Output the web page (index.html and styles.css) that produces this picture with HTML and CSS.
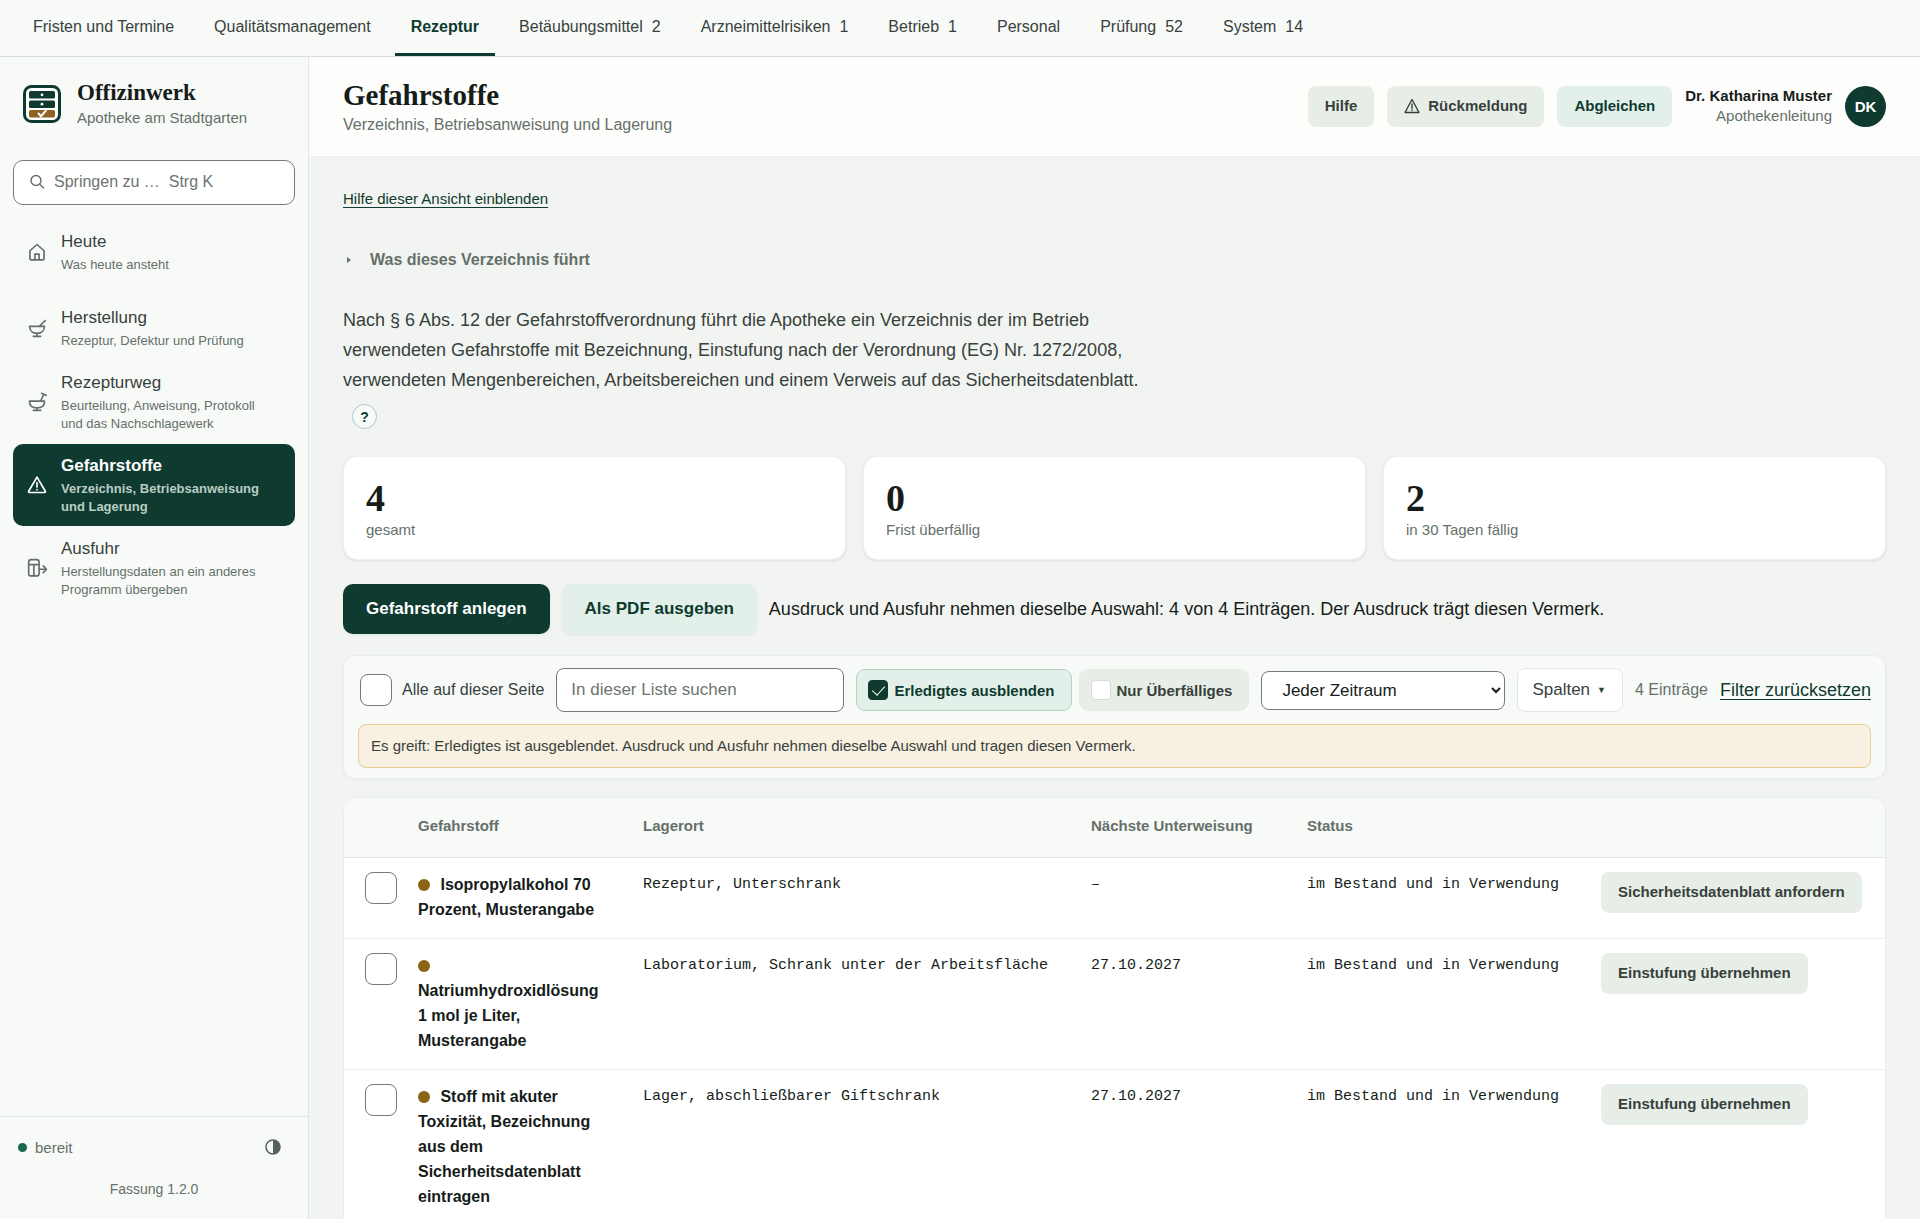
FILE: index.html
```html
<!DOCTYPE html>
<html lang="de">
<head>
  <meta charset="UTF-8" />
  <meta name="viewport" content="width=device-width, initial-scale=1.0"/>
  <title>Gefahrstoffe – Offizinwerk</title>
  <link rel="stylesheet" href="styles.css">
</head>
<body>
  <nav class="topnav" aria-label="Bereiche">
    <a href="#">Fristen und Termine</a>
    <a href="#">Qualitätsmanagement</a>
    <a href="#" class="active" aria-current="page">Rezeptur</a>
    <a href="#">Betäubungsmittel <span>2</span></a>
    <a href="#">Arzneimittelrisiken <span>1</span></a>
    <a href="#">Betrieb <span>1</span></a>
    <a href="#">Personal</a>
    <a href="#">Prüfung <span>52</span></a>
    <a href="#">System <span>14</span></a>
  </nav>

  <div class="shell">
    <aside class="sidebar">
      <div class="brand">
        <svg class="logo" viewBox="0 0 38 38" aria-hidden="true">
          <rect x="1.5" y="1.5" width="35" height="35" rx="7" fill="#fff" stroke="#0f3a2f" stroke-width="3"/>
          <rect x="6" y="6" width="26" height="7.5" rx="1.5" fill="#0f3a2f"/>
          <rect x="6" y="15.5" width="26" height="7.5" rx="1.5" fill="#0f3a2f"/>
          <rect x="6" y="25" width="26" height="7.5" rx="1.5" fill="#8f6423"/>
          <circle cx="19" cy="9.8" r="1.4" fill="#fff"/>
          <circle cx="19" cy="19.2" r="1.4" fill="#fff"/>
          <path d="M15 28l3 3.2 5.4-6" fill="none" stroke="#fff" stroke-width="2"/>
        </svg>
        <div>
          <div class="brand-name">Offizinwerk</div>
          <div class="brand-sub">Apotheke am Stadtgarten</div>
        </div>
      </div>

      <label class="jump">
        <svg class="icon-small" viewBox="0 0 16 16" aria-hidden="true"><circle cx="7" cy="6.5" r="5"/><path d="M10.8 10.3L14.5 14"/></svg>
        <input type="text" aria-label="Springen zu" placeholder="Springen zu …&nbsp; Strg K">
      </label>

      <nav class="menu" aria-label="Rezeptur">
        <a href="#" class="menu-item first">
          <svg class="icon" viewBox="0 0 24 24" aria-hidden="true"><path d="M3.5 10.5L12 3l8.5 7.5V20a1.5 1.5 0 0 1-1.5 1.5H5A1.5 1.5 0 0 1 3.5 20z"/><path d="M9.5 21v-6.5h5V21"/></svg>
          <span><b>Heute</b><small>Was heute ansteht</small></span>
        </a>
        <a href="#" class="menu-item">
          <svg class="icon" viewBox="0 0 24 24" aria-hidden="true"><path d="M3 10h18c0 5-3.5 8.5-9 8.5S3 15 3 10z"/><path d="M12 18.5V22M7.5 22h9M15.5 9.5L22 3"/></svg>
          <span><b>Herstellung</b><small>Rezeptur, Defektur und Prüfung</small></span>
        </a>
        <a href="#" class="menu-item">
          <svg class="icon" viewBox="0 0 24 24" aria-hidden="true"><path d="M3 11h18c0 5-3.5 8-9 8s-9-3-9-8z"/><path d="M12 19v3M7.5 22h9M16.5 10.5L20 3M17.5 1.5L23 4"/></svg>
          <span><b>Rezepturweg</b><small>Beurteilung, Anweisung, Protokoll und das Nachschlagewerk</small></span>
        </a>
        <a href="#" class="menu-item active" aria-current="page">
          <svg class="icon" viewBox="0 0 24 24" aria-hidden="true"><path d="M12 2.5L2 19.5a1 1 0 0 0 .9 1.5h18.2a1 1 0 0 0 .9-1.5z"/><path d="M12 9v5.5M12 17.5v.5"/></svg>
          <span><b>Gefahrstoffe</b><small>Verzeichnis, Betriebsanweisung und Lagerung</small></span>
        </a>
        <a href="#" class="menu-item">
          <svg class="icon" viewBox="0 0 24 24" aria-hidden="true"><rect x="2" y="2" width="12.5" height="19.5" rx="3"/><path d="M2 8h12.5M8.2 8v13.5M14.5 13.5H23M19.5 9.5l4 4-4 4"/></svg>
          <span><b>Ausfuhr</b><small>Herstellungsdaten an ein anderes Programm übergeben</small></span>
        </a>
      </nav>

      <div class="sidebar-foot">
        <div class="state">
          <span class="state-dot"></span>
          <span>bereit</span>
          <button type="button" class="theme" aria-label="Darstellung wechseln">
            <svg viewBox="0 0 16 16" aria-hidden="true"><circle cx="8" cy="8" r="7" fill="none" stroke="currentColor" stroke-width="1.5"/><path d="M8 1a7 7 0 0 1 0 14z" fill="currentColor"/></svg>
          </button>
        </div>
        <div class="version">Fassung 1.2.0</div>
      </div>
    </aside>

    <main class="main">
      <header class="page-head">
        <div>
          <h1>Gefahrstoffe</h1>
          <p>Verzeichnis, Betriebsanweisung und Lagerung</p>
        </div>
        <div class="head-actions">
          <button type="button" class="btn">Hilfe</button>
          <button type="button" class="btn">
            <svg class="icon-small" viewBox="0 0 16 16" aria-hidden="true"><path d="M8 1.5L1 14.5h14z"/><path d="M8 6v4.5M8 12v.5"/></svg>
            Rückmeldung
          </button>
          <button type="button" class="btn btn-mint">Abgleichen</button>
          <div class="user">
            <strong>Dr. Katharina Muster</strong>
            <span>Apothekenleitung</span>
          </div>
          <div class="avatar">DK</div>
        </div>
      </header>

      <div class="content">
        <a href="#" class="help-link">Hilfe dieser Ansicht einblenden</a>

        <details class="about">
          <summary>Was dieses Verzeichnis führt</summary>
        </details>

        <p class="intro">Nach § 6 Abs. 12 der Gefahrstoffverordnung führt die Apotheke ein Verzeichnis der im Betrieb verwendeten Gefahrstoffe mit Bezeichnung, Einstufung nach der Verordnung (EG) Nr. 1272/2008, verwendeten Mengenbereichen, Arbeitsbereichen und einem Verweis auf das Sicherheitsdatenblatt. <button type="button" class="hint">?</button></p>

        <div class="stats">
          <div class="stat"><strong>4</strong><span>gesamt</span></div>
          <div class="stat"><strong>0</strong><span>Frist überfällig</span></div>
          <div class="stat"><strong>2</strong><span>in 30 Tagen fällig</span></div>
        </div>

        <div class="actions">
          <button type="button" class="btn-large primary">Gefahrstoff anlegen</button>
          <button type="button" class="btn-large">Als PDF ausgeben</button>
          <span>Ausdruck und Ausfuhr nehmen dieselbe Auswahl: 4 von 4 Einträgen. Der Ausdruck trägt diesen Vermerk.</span>
        </div>

        <section class="filter">
          <div class="filter-row">
            <label class="all"><input type="checkbox" class="check"> Alle auf dieser Seite</label>
            <input type="search" class="search" aria-label="In dieser Liste suchen" placeholder="In dieser Liste suchen">
            <div class="chips">
              <label class="chip on"><input type="checkbox" checked> Erledigtes ausblenden</label>
              <label class="chip"><input type="checkbox"> Nur Überfälliges</label>
            </div>
            <select class="period" aria-label="Zeitraum">
              <option>Jeder Zeitraum</option>
            </select>
            <button type="button" class="columns">Spalten <span>▼</span></button>
            <span class="count">4 Einträge</span>
            <a href="#" class="reset">Filter zurücksetzen</a>
          </div>
          <div class="notice">Es greift: Erledigtes ist ausgeblendet. Ausdruck und Ausfuhr nehmen dieselbe Auswahl und tragen diesen Vermerk.</div>
        </section>

        <div class="table-card">
          <table>
            <colgroup>
              <col class="c-check"><col class="c-name"><col class="c-place"><col class="c-date"><col class="c-status"><col>
            </colgroup>
            <thead>
              <tr>
                <th></th>
                <th>Gefahrstoff</th>
                <th>Lagerort</th>
                <th>Nächste Unterweisung</th>
                <th>Status</th>
                <th></th>
              </tr>
            </thead>
            <tbody>
              <tr>
                <td><input type="checkbox" class="check" aria-label="Isopropylalkohol auswählen"></td>
                <td class="name"><i class="dot"></i> Isopropylalkohol 70 Prozent, Musterangabe</td>
                <td class="mono">Rezeptur, Unterschrank</td>
                <td class="mono">–</td>
                <td class="mono">im Bestand und in Verwendung</td>
                <td><button type="button" class="btn">Sicherheitsdatenblatt anfordern</button></td>
              </tr>
              <tr>
                <td><input type="checkbox" class="check" aria-label="Natriumhydroxidlösung auswählen"></td>
                <td class="name"><i class="dot"></i> Natriumhydroxidlösung 1 mol je Liter, Musterangabe</td>
                <td class="mono">Laboratorium, Schrank unter der Arbeitsfläche</td>
                <td class="mono">27.10.2027</td>
                <td class="mono">im Bestand und in Verwendung</td>
                <td><button type="button" class="btn">Einstufung übernehmen</button></td>
              </tr>
              <tr>
                <td><input type="checkbox" class="check" aria-label="Stoff mit akuter Toxizität auswählen"></td>
                <td class="name"><i class="dot"></i> Stoff mit akuter Toxizität, Bezeichnung aus dem Sicherheitsdatenblatt eintragen</td>
                <td class="mono">Lager, abschließbarer Giftschrank</td>
                <td class="mono">27.10.2027</td>
                <td class="mono">im Bestand und in Verwendung</td>
                <td><button type="button" class="btn">Einstufung übernehmen</button></td>
              </tr>
            </tbody>
          </table>
        </div>
      </div>
    </main>
  </div>
</body>
</html>
```
FILE: styles.css
```css
:root {
  --green: #0f3a2f;
  --ink: #161c19;
  --text: #37413c;
  --muted: #65706a;
  --line: #e3e7e4;
  --control: #75797a;
  --mint: #e2f0e9;
  --sage: #e7eee7;
  --panel: #f8faf8;
  --page: #f2f4f1;
  --brown: #8a6414;
}

* {
  box-sizing: border-box;
}

body {
  margin: 0;
  height: 100vh;
  display: flex;
  flex-direction: column;
  font-family: "Liberation Sans", Arial, sans-serif;
  font-size: 16px;
  color: var(--text);
  background: var(--page);
}

button,
input,
select {
  font-family: inherit;
}

/* top navigation */
.topnav {
  display: flex;
  flex: none;
  gap: 8px;
  height: 57px;
  padding: 0 17px;
  background: var(--panel);
  border-bottom: 1px solid #d9dedb;
}

.topnav a {
  display: flex;
  gap: 9px;
  padding: 16px 16px 0;
  line-height: 22px;
  color: var(--text);
  text-decoration: none;
  border-bottom: 3px solid transparent;
}

.topnav a.active {
  color: var(--green);
  font-weight: bold;
  border-color: var(--green);
}

.shell {
  display: flex;
  flex: 1;
  min-height: 0;
}

/* sidebar */
.sidebar {
  display: flex;
  flex-direction: column;
  flex: none;
  width: 309px;
  background: var(--panel);
  border-right: 1px solid var(--line);
}

.brand {
  display: flex;
  align-items: center;
  gap: 16px;
  padding: 22px 23px 31px;
}

.logo {
  width: 38px;
  height: 38px;
}

.brand-name {
  font: bold 23px/28px "Liberation Serif", serif;
  color: var(--ink);
}

.brand-sub {
  font-size: 15px;
  line-height: 22px;
  color: var(--muted);
}

.jump {
  display: flex;
  align-items: center;
  gap: 9px;
  height: 45px;
  margin: 0 13px;
  padding: 0 15px 2px;
  color: var(--muted);
  background: #fff;
  border: 1px solid var(--control);
  border-radius: 10px;
}

.jump input {
  flex: 1;
  min-width: 0;
  padding: 0;
  border: 0;
  font-size: 16px;
  background: none;
}

::placeholder {
  color: #6d7571;
}

.icon,
.icon-small {
  flex: none;
  fill: none;
  stroke: currentColor;
  stroke-width: 2;
  stroke-linejoin: round;
  stroke-linecap: round;
}

.icon {
  width: 20px;
  height: 20px;
}

.icon-small {
  width: 16px;
  height: 16px;
  stroke-width: 1.4;
}

.menu {
  display: flex;
  flex-direction: column;
  gap: 1px;
  padding: 15px 13px;
}

.menu-item {
  display: flex;
  align-items: center;
  gap: 14px;
  padding: 10px 20px 10px 14px;
  color: var(--muted);
  text-decoration: none;
  border-radius: 10px;
}

.menu-item.first {
  margin-bottom: 11px;
}

.menu-item b {
  display: block;
  margin-bottom: 2px;
  font-size: 17px;
  font-weight: normal;
  line-height: 24px;
  color: var(--text);
}

.menu-item small {
  display: block;
  font-size: 13px;
  line-height: 18px;
}

.menu-item.active {
  color: #fff;
  background: var(--green);
}

.menu-item.active b {
  color: #fff;
  font-weight: bold;
}

.menu-item.active small {
  color: #b9cdc4;
  font-weight: bold;
}

.sidebar-foot {
  margin-top: auto;
  padding: 18px 18px 20px;
  font-size: 15px;
  color: var(--muted);
  border-top: 1px solid var(--line);
}

.state {
  display: flex;
  align-items: center;
  gap: 8px;
}

.state-dot {
  width: 9px;
  height: 9px;
  border-radius: 50%;
  background: #17694c;
}

.theme {
  display: flex;
  margin-left: auto;
  padding: 4px 9px;
  border: 0;
  color: #56615c;
  background: none;
}

.theme svg {
  width: 16px;
  height: 16px;
}

.version {
  margin-top: 20px;
  font-size: 14px;
  line-height: 20px;
  text-align: center;
}

/* page head */
.main {
  flex: 1;
  min-width: 0;
  overflow-y: auto;
  scrollbar-width: none;
}

.page-head {
  display: flex;
  align-items: center;
  justify-content: space-between;
  height: 100px;
  padding: 0 34px;
  background: #fdfefb;
  border-bottom: 1px solid #eef0ed;
}

.page-head h1 {
  margin: 0;
  font: bold 29px/36px "Liberation Serif", serif;
  color: var(--ink);
}

.page-head p {
  margin: 0;
  line-height: 24px;
  color: var(--muted);
}

.head-actions {
  display: flex;
  align-items: center;
  gap: 13px;
}

.btn {
  display: inline-flex;
  align-items: center;
  gap: 8px;
  height: 41px;
  padding: 0 17px 2px;
  border: 0;
  border-radius: 8px;
  font-size: 15px;
  font-weight: bold;
  white-space: nowrap;
  color: var(--text);
  background: var(--sage);
}

.btn-mint {
  color: var(--green);
  background: var(--mint);
}

.user {
  display: flex;
  flex-direction: column;
  padding-bottom: 2px;
  font-size: 15px;
  line-height: 20px;
  text-align: right;
  color: var(--muted);
}

.user strong {
  color: var(--ink);
}

.avatar {
  display: flex;
  align-items: center;
  justify-content: center;
  width: 41px;
  height: 41px;
  border-radius: 50%;
  font-size: 15px;
  font-weight: bold;
  color: #fff;
  background: var(--green);
}

/* content */
.content {
  padding: 31px 34px;
}

.help-link {
  font-size: 15px;
  line-height: 22px;
}

.help-link,
.reset {
  color: var(--green);
  text-decoration: underline;
  text-decoration-thickness: 1px;
  text-underline-offset: 3px;
}

.about {
  margin-top: 38px;
}

.about summary {
  display: flex;
  align-items: center;
  gap: 19px;
  padding-left: 4px;
  font-weight: bold;
  line-height: 24px;
  color: var(--muted);
}

.about summary::before {
  content: "";
  border: 3px solid transparent;
  border-left: 4px solid var(--muted);
  border-right: 0;
}

.intro {
  max-width: 830px;
  margin: 33px 0 27px;
  font-size: 18px;
  line-height: 30px;
}

.hint {
  width: 25px;
  height: 25px;
  margin: 9px 0 0 9px;
  padding: 0;
  border: 1px solid #a9cdbd;
  border-radius: 50%;
  font-size: 14px;
  font-weight: bold;
  color: var(--green);
  background: #f8faf8;
  vertical-align: middle;
}

.stats {
  display: grid;
  grid-template-columns: repeat(3, 1fr);
  gap: 17px;
}

.stat {
  display: flex;
  flex-direction: column;
  padding: 19px 22px;
  background: #fff;
  border: 1px solid #eef1ee;
  border-radius: 14px;
  box-shadow: 0 1px 3px rgba(20, 40, 30, 0.1);
}

.stat strong {
  font: bold 38px/44px "Liberation Serif", serif;
  color: var(--ink);
}

.stat span {
  font-size: 15px;
  line-height: 20px;
  color: var(--muted);
}

.actions {
  display: flex;
  align-items: center;
  gap: 12px;
  margin: 24px 0 21px;
  font-size: 18px;
  color: var(--ink);
}

.btn-large {
  height: 50px;
  padding: 0 23px;
  border: 0;
  border-radius: 10px;
  font-size: 17px;
  font-weight: bold;
  color: var(--green);
  background: var(--mint);
  box-shadow: 0 1px 3px rgba(20, 40, 30, 0.08);
}

.btn-large.primary {
  color: #fff;
  background: var(--green);
}

/* filter panel */
.filter {
  padding: 12px 14px 10px;
  background: var(--panel);
  border: 1px solid #e9edea;
  border-radius: 12px;
  box-shadow: 0 1px 3px rgba(20, 40, 30, 0.04);
}

.filter-row {
  display: flex;
  align-items: center;
  gap: 12px;
  white-space: nowrap;
}

.check {
  appearance: none;
  display: block;
  flex: none;
  width: 32px;
  height: 32px;
  margin: 0;
  background: #fff;
  border: 1px solid var(--control);
  border-radius: 8px;
}

.all {
  display: flex;
  align-items: center;
  gap: 10px;
  padding-left: 2px;
}

.search {
  flex: 1;
  min-width: 160px;
  height: 44px;
  padding: 0 14px;
  border: 1px solid var(--control);
  border-radius: 8px;
  font-size: 17px;
  background: #fff;
}

.chips {
  display: flex;
  gap: 7px;
}

.chip {
  display: flex;
  align-items: center;
  gap: 6px;
  height: 42px;
  padding: 0 16px 0 11px;
  border: 1px solid transparent;
  border-radius: 9px;
  font-size: 15px;
  font-weight: bold;
  background: var(--sage);
}

.chip.on {
  color: var(--green);
  background: var(--mint);
  border-color: #b4d2c4;
}

.chip input {
  appearance: none;
  width: 20px;
  height: 20px;
  margin: 0;
  background: #fff;
  border: 1px solid #d5dcd7;
  border-radius: 4px;
}

.chip input:checked {
  display: flex;
  justify-content: center;
  background: var(--green);
  border-color: var(--green);
}

.chip input:checked::before {
  content: "";
  width: 6px;
  height: 11px;
  margin-top: 2px;
  border: solid #fff;
  border-width: 0 1px 1px 0;
  transform: rotate(42deg);
}

.period {
  width: 244px;
  height: 39px;
  padding: 0 16px;
  border: 1px solid var(--control);
  border-radius: 8px;
  font-size: 17px;
  color: var(--ink);
  background: #fff;
}

.columns {
  display: flex;
  align-items: center;
  gap: 7px;
  height: 44px;
  padding: 0 16px 0 14px;
  border: 1px solid var(--line);
  border-radius: 8px;
  font-size: 17px;
  color: var(--text);
  background: #fff;
}

.columns span {
  font-size: 9px;
}

.count {
  color: var(--muted);
}

.reset {
  font-size: 18px;
}

.notice {
  margin-top: 12px;
  padding: 11px 12px;
  font-size: 15px;
  line-height: 20px;
  background: #f8f0e1;
  border: 1px solid #e8cd95;
  border-radius: 8px;
}

/* table */
.table-card {
  margin-top: 18px;
  overflow: hidden;
  background: #fff;
  border: 1px solid #e9edea;
  border-radius: 14px 14px 0 0;
}

table {
  width: 100%;
  border-collapse: collapse;
}

.c-check { width: 51px; }
.c-name { width: 225px; }
.c-place { width: 448px; }
.c-date { width: 216px; }
.c-status { width: 294px; }

th {
  height: 59px;
  padding: 0 21px 4px;
  font-size: 15px;
  text-align: left;
  color: var(--muted);
  background: var(--panel);
  border-bottom: 1px solid #e0e5e2;
}

td {
  padding: 14px 21px 16px;
  vertical-align: top;
  line-height: 25px;
  color: var(--ink);
  border-bottom: 1px solid #eceeec;
}

td:first-child {
  padding-right: 0;
}

.name {
  font-weight: bold;
}

.dot {
  display: inline-block;
  width: 12px;
  height: 12px;
  margin-right: 6px;
  border-radius: 50%;
  background: var(--brown);
  vertical-align: -1px;
}

.mono {
  font-family: "Liberation Mono", monospace;
  font-size: 15px;
  white-space: nowrap;
}
```
